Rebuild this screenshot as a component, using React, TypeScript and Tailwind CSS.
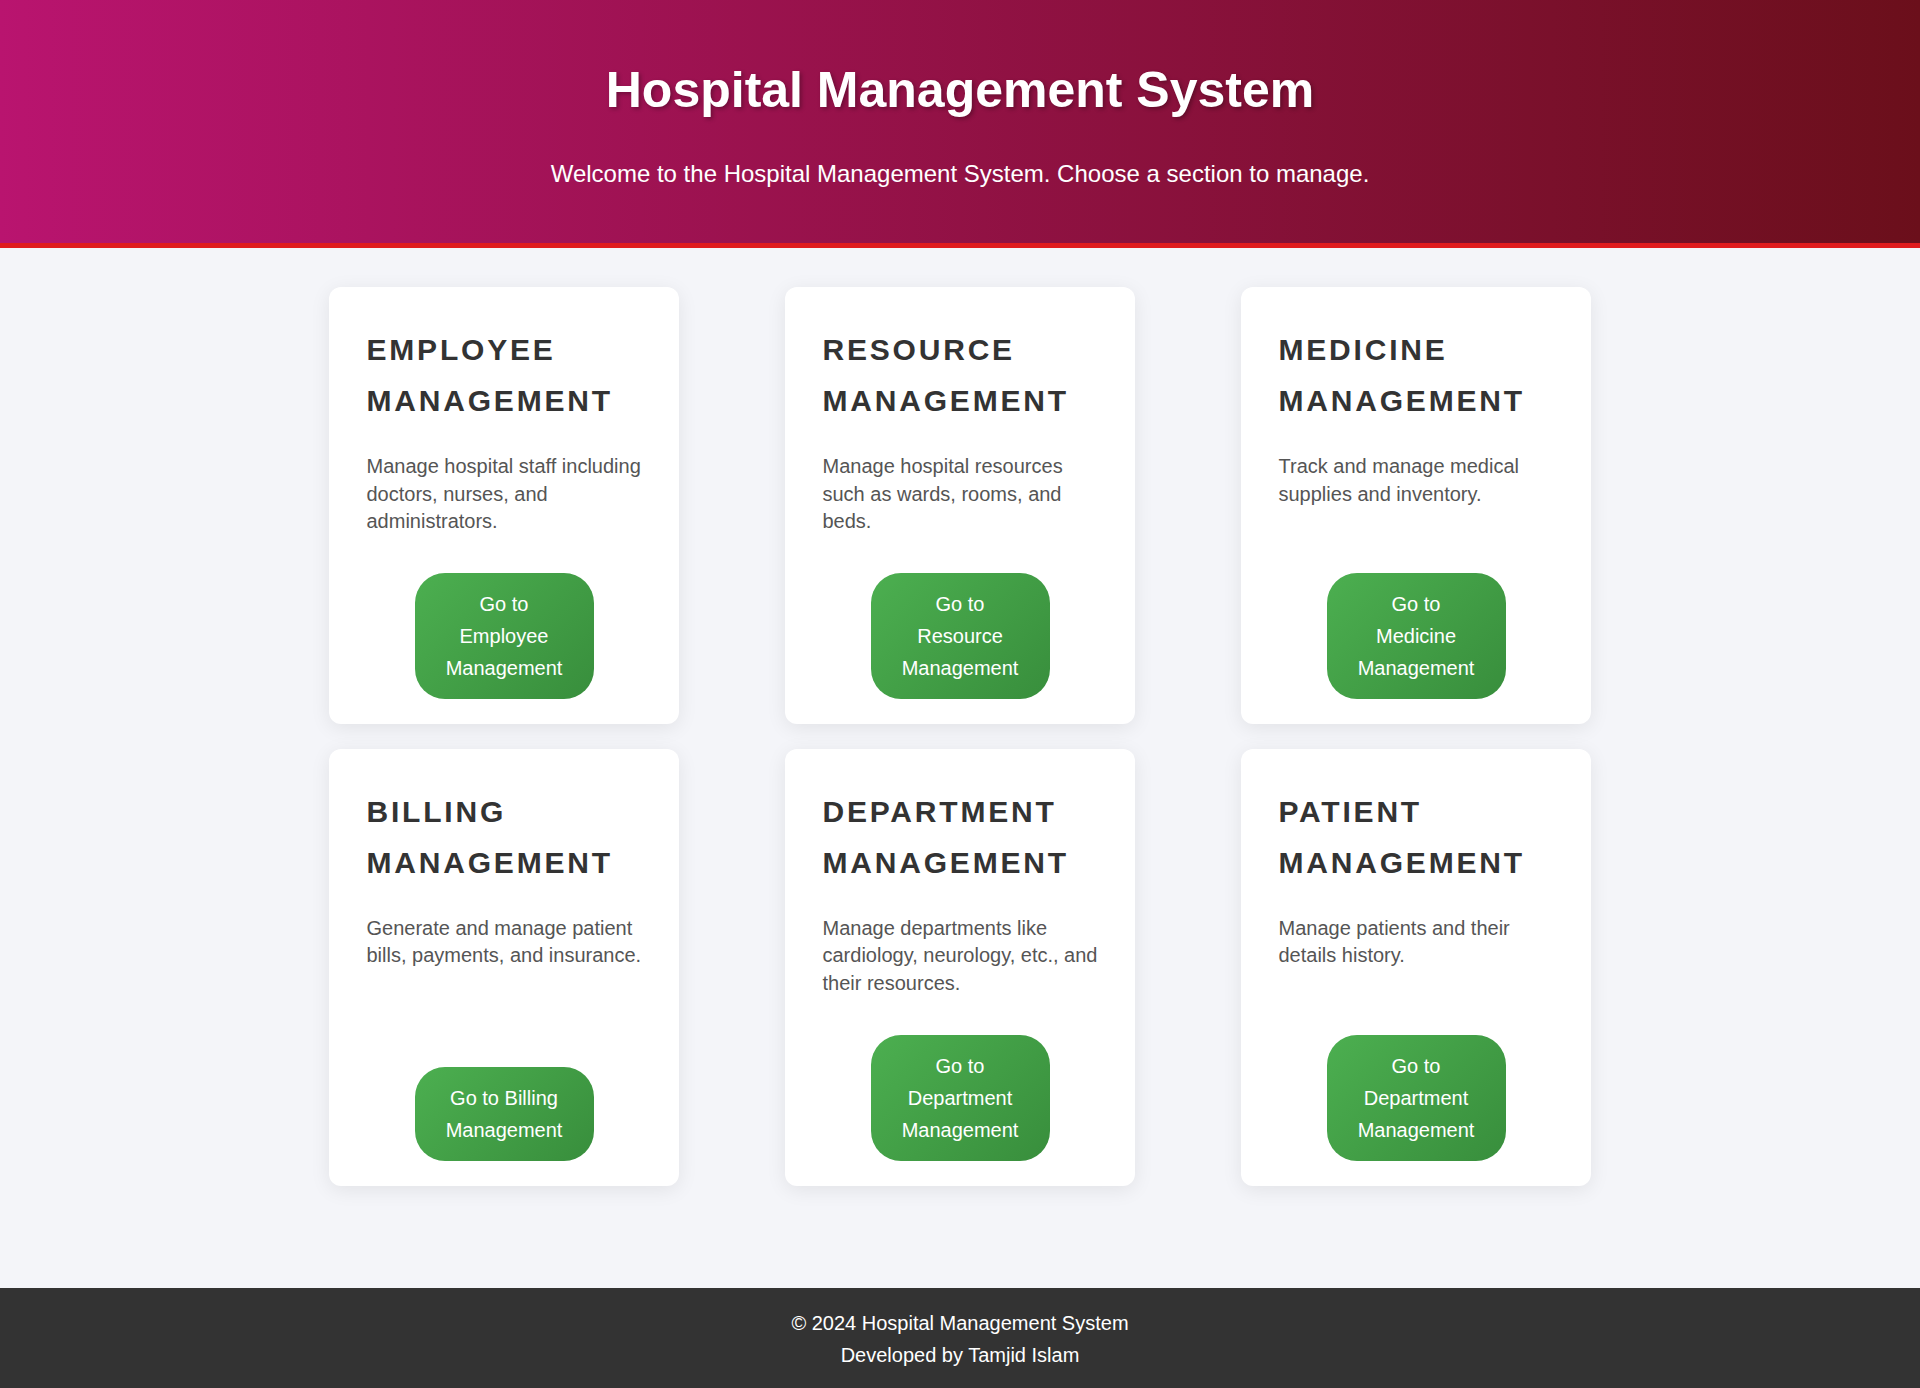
import React from "react";

type Card = { title: string; desc: string; button: string };

const cards: Card[] = [
  {
    title: "Employee Management",
    desc: "Manage hospital staff including doctors, nurses, and administrators.",
    button: "Go to Employee Management",
  },
  {
    title: "Resource Management",
    desc: "Manage hospital resources such as wards, rooms, and beds.",
    button: "Go to Resource Management",
  },
  {
    title: "Medicine Management",
    desc: "Track and manage medical supplies and inventory.",
    button: "Go to Medicine Management",
  },
  {
    title: "Billing Management",
    desc: "Generate and manage patient bills, payments, and insurance.",
    button: "Go to Billing Management",
  },
  {
    title: "Department Management",
    desc: "Manage departments like cardiology, neurology, etc., and their resources.",
    button: "Go to Department Management",
  },
  {
    title: "Patient Management",
    desc: "Manage patients and their details history.",
    button: "Go to Department Management",
  },
];

export default function App() {
  return (
    <div className="min-h-screen flex flex-col bg-[#f4f5f9] font-['Liberation_Sans',Arial,sans-serif]">
      <header className="bg-[linear-gradient(to_right,#b9146f,#6b0f1b)] border-b-[5px] border-[#e01b1e] pt-[61px] pb-[55px] text-center text-white">
        <h1 className="text-[50px] leading-[58px] font-bold [text-shadow:2px_2px_4px_rgba(0,0,0,0.3)]">
          Hospital Management System
        </h1>
        <p className="mt-[41px] text-[24px] leading-[28px]">
          Welcome to the Hospital Management System. Choose a section to manage.
        </p>
      </header>

      <main className="flex-1 pt-[39px] pb-[100px]">
        <div className="grid grid-cols-[repeat(3,350px)] gap-x-[106px] gap-y-[25px] justify-center">
          {cards.map((c, i) => (
            <div
              key={i}
              className="flex flex-col bg-white rounded-[12px] shadow-[0_4px_20px_rgba(0,0,0,0.08)] pt-[37px] pl-[37.5px] pr-[32px] pb-[25px]"
            >
              <h2 className="text-[30px] leading-[51px] font-bold uppercase tracking-[2.8px] text-[#333333]">
                {c.title}
              </h2>
              <p className="mt-[27px] mb-[37px] text-[20px] leading-[27.6px] text-[#555555]">
                {c.desc}
              </p>
              <div className="mt-auto flex justify-center pr-[5.5px]">
                <a
                  href="#"
                  className="w-[179px] px-[30px] py-[15px] rounded-[30px] bg-[linear-gradient(135deg,#4caf50,#388e3c)] text-white text-[20px] leading-[32px] text-center"
                >
                  {c.button}
                </a>
              </div>
            </div>
          ))}
        </div>
      </main>

      <footer className="bg-[#333333] text-white text-center text-[20px] leading-[31.5px] pt-[20px] pb-[17px]">
        <p>© 2024 Hospital Management System</p>
        <p>Developed by Tamjid Islam</p>
      </footer>
    </div>
  );
}
